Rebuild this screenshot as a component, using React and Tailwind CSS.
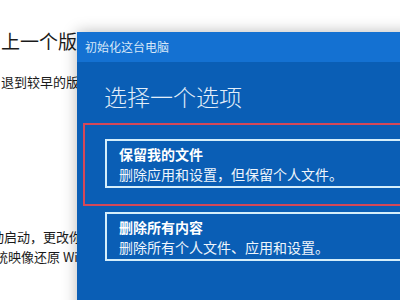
import React from 'react';

const OptionBox = ({ title, desc }) => (
  <div className="border-2 border-[#d4eefb] pl-[12px] pt-[3px] pb-[2px]">
    <div className="text-[14px] leading-[20px] font-bold text-white whitespace-nowrap">{title}</div>
    <div className="text-[14px] leading-[20px] text-[#eef5fc] whitespace-nowrap">{desc}</div>
  </div>
);

const App = () => {
  return (
    <div
      className="w-[400px] h-[300px] overflow-hidden bg-white flex"
      style={{ fontFamily: '"Noto Sans CJK SC", "Noto Sans", sans-serif' }}
    >
      {/* settings page behind the dialog */}
      <div className="w-[77px] shrink-0 overflow-hidden text-[#1a1a1a] pt-[29px]">
        <div className="text-[19px] leading-[24px] ml-[1px] whitespace-nowrap">上一个版本</div>
        <div className="text-[13px] leading-[20px] mt-[19px] ml-[1px] whitespace-nowrap">退到较早的版本</div>
        <div className="text-[13px] leading-[20px] mt-[135px] ml-[-9px] whitespace-nowrap">动启动，更改你的</div>
        <div className="text-[13px] leading-[20px] ml-[-5px] whitespace-nowrap">统映像还原 Windows</div>
      </div>

      {/* reset dialog */}
      <div className="mt-[32px] w-[420px] h-[300px] shrink-0 bg-[#0a5eb5] shadow-[0_0_14px_rgba(0,0,0,0.28)]">
        <div className="h-[30px] bg-[#1471d2] flex items-center pl-[8px]">
          <span className="text-[12px] text-[#d6e7f8]">初始化这台电脑</span>
        </div>
        <div className="pt-[18px]">
          <h1 className="text-[23px] leading-[32px] font-light text-[#e3eef9] pl-[27px]">选择一个选项</h1>
          <div className="mt-[11px] ml-[6px] border-2 border-[#d44858] pl-[20px] pt-[14px] pb-[16px]">
            <OptionBox title="保留我的文件" desc="删除应用和设置，但保留个人文件。" />
          </div>
          <div className="mt-[6px] ml-[28px]">
            <OptionBox title="删除所有内容" desc="删除所有个人文件、应用和设置。" />
          </div>
        </div>
      </div>
    </div>
  );
};

export default App;
